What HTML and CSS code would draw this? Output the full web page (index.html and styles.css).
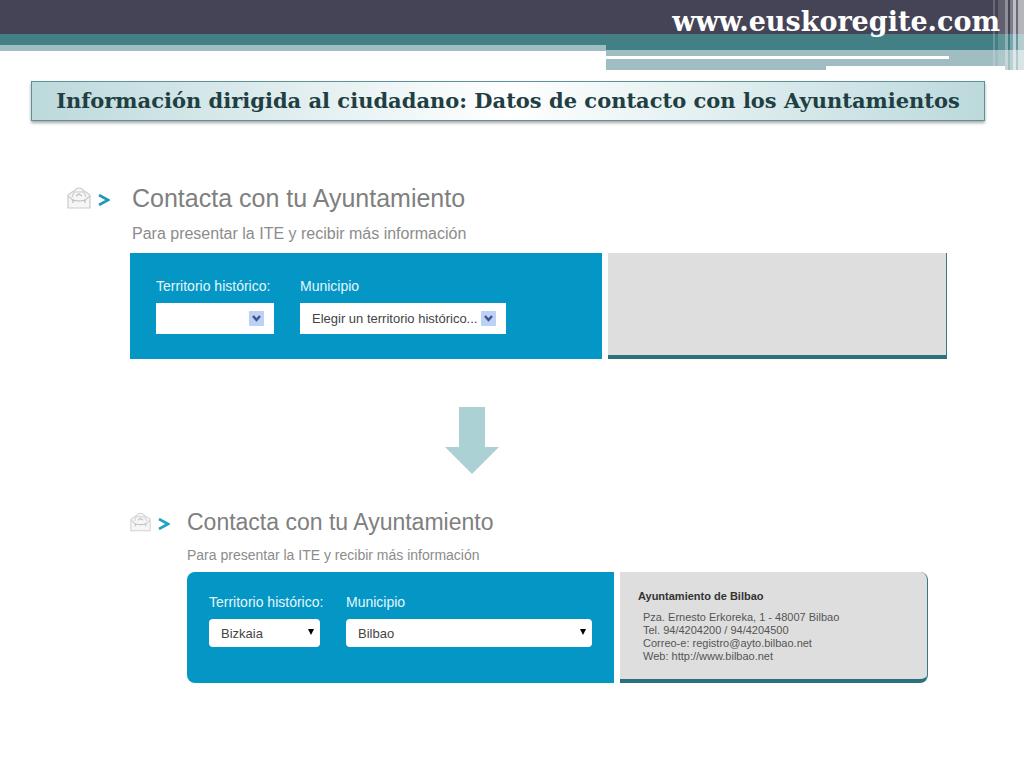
FILE: index.html
```html
<!DOCTYPE html>
<html lang="es">
<head>
    <meta charset="UTF-8">
    <meta name="viewport" content="width=device-width, initial-scale=1.0">
    <title>www.euskoregite.com</title>
    <link rel="stylesheet" href="styles.css">
</head>
<body>
    <header class="cabecera">
        <div class="banda-oscura">
            <a href="#" class="sitio">www.euskoregite.com</a>
        </div>
        <div class="bandas">
            <div class="bandas-izq"></div>
            <div class="bandas-der">
                <div class="linea-blanca"></div>
                <div class="muesca"></div>
            </div>
        </div>
        <div class="rayas"></div>
    </header>

    <main>
        <h1 class="titulo">Información dirigida al ciudadano: Datos de contacto con los Ayuntamientos</h1>

        <section class="contacto">
            <div class="encabezado">
                <svg class="sobre" viewBox="0 0 24 22" fill="#f6f6f6" stroke="#cccccc" stroke-width="1.2">
                    <path d="M1 8 L5 5 Q8 4 9 2 Q12 0 15 2 Q16 4 19 5 L23 8 V21 H1 Z"/>
                    <path d="M5 10 L7 5 H17 L19 10 M1 9 L7 14 M23 9 L17 14" fill="none"/>
                    <path d="M6 16 V13 Q12 15 18 13 V16 M9 9 L12 7 L15 9" fill="none" stroke="#bdbdbd"/>
                </svg>
                <svg class="flecha" viewBox="0 0 12 12" fill="none" stroke="#1f9bb5" stroke-width="2.6">
                    <path d="M1 1 L10 6 L1 11"/>
                </svg>
                <h2>Contacta con tu Ayuntamiento</h2>
            </div>
            <p class="subtitulo">Para presentar la ITE y recibir más información</p>
            <div class="paneles">
                <form class="filtro">
                    <div class="campo campo-territorio">
                        <label for="territorio1">Territorio histórico:</label>
                        <div class="selector">
                            <select id="territorio1">
                                <option value="" selected></option>
                                <option>Bizkaia</option>
                            </select>
                            <svg class="boton-xp" viewBox="0 0 15 15">
                                <rect width="15" height="15" rx="1" fill="#bdd0f6"/>
                                <path d="M4 5 L7.500 9 L11 5" fill="none" stroke="#3c5488" stroke-width="2.4"/>
                            </svg>
                        </div>
                    </div>
                    <div class="campo campo-municipio">
                        <label for="municipio1">Municipio</label>
                        <div class="selector">
                            <select id="municipio1">
                                <option selected>Elegir un territorio histórico...</option>
                            </select>
                            <svg class="boton-xp" viewBox="0 0 15 15">
                                <rect width="15" height="15" rx="1" fill="#bdd0f6"/>
                                <path d="M4 5 L7.500 9 L11 5" fill="none" stroke="#3c5488" stroke-width="2.4"/>
                            </svg>
                        </div>
                    </div>
                </form>
                <div class="ficha"></div>
            </div>
        </section>

        <svg class="flecha-abajo" viewBox="0 0 54 67" fill="#abd1d5">
            <path d="M14 0 H40 V40 H54 L27 67 L0 40 H14 Z"/>
        </svg>

        <section class="contacto resultado">
            <div class="encabezado">
                <svg class="sobre" viewBox="0 0 24 22" fill="#f6f6f6" stroke="#d2d2d2" stroke-width="1.2">
                    <path d="M1 8 L5 5 Q8 4 9 2 Q12 0 15 2 Q16 4 19 5 L23 8 V21 H1 Z"/>
                    <path d="M5 10 L7 5 H17 L19 10 M1 9 L7 14 M23 9 L17 14" fill="none"/>
                    <path d="M6 16 V13 Q12 15 18 13 V16 M9 9 L12 7 L15 9" fill="none" stroke="#c2c2c2"/>
                </svg>
                <svg class="flecha" viewBox="0 0 12 12" fill="none" stroke="#1fa5bd" stroke-width="2.6">
                    <path d="M1 1 L10 6 L1 11"/>
                </svg>
                <h2>Contacta con tu Ayuntamiento</h2>
            </div>
            <p class="subtitulo">Para presentar la ITE y recibir más información</p>
            <div class="paneles">
                <form class="filtro">
                    <div class="campo campo-territorio">
                        <label for="territorio2">Territorio histórico:</label>
                        <div class="selector">
                            <select id="territorio2">
                                <option selected>Bizkaia</option>
                            </select>
                            <svg class="triangulo" viewBox="0 0 6 6"><path d="M0 0 H6 L3 6 Z"/></svg>
                        </div>
                    </div>
                    <div class="campo campo-municipio">
                        <label for="municipio2">Municipio</label>
                        <div class="selector">
                            <select id="municipio2">
                                <option selected>Bilbao</option>
                            </select>
                            <svg class="triangulo" viewBox="0 0 6 6"><path d="M0 0 H6 L3 6 Z"/></svg>
                        </div>
                    </div>
                </form>
                <div class="ficha">
                    <h3>Ayuntamiento de Bilbao</h3>
                    <address>
                        Pza. Ernesto Erkoreka, 1 - 48007 Bilbao<br>
                        Tel. 94/4204200 / 94/4204500<br>
                        Correo-e: <a href="#">registro@ayto.bilbao.net</a><br>
                        Web: <a href="#">http://www.bilbao.net</a>
                    </address>
                </div>
            </div>
        </section>
    </main>
</body>
</html>
```
FILE: styles.css
```css
* {
    margin: 0;
    padding: 0;
    box-sizing: border-box;
}
body {
    font-family: "Liberation Sans", Arial, sans-serif;
    background: #fff;
    color: #444;
}
a {
    color: inherit;
    text-decoration: none;
}

/* Cabecera */
.cabecera {
    position: relative;
}
.banda-oscura {
    height: 34px;
    padding-right: 24px;
    background: #444456;
    text-align: right;
}
.sitio {
    position: relative;
    z-index: 2;
    font-family: Georgia, "DejaVu Serif", serif;
    font-size: 27px;
    line-height: 44px;
    font-weight: bold;
    color: #fff;
}
.bandas {
    display: flex;
    align-items: flex-start;
}
.bandas-izq {
    width: 59.2%;
    height: 17px;
    background: #438086;
    border-bottom: 6px solid #a0bdc1;
}
.bandas-der {
    flex: 1;
    height: 36px;
    border-top: 16px solid #438086;
    background: #a0bdc1;
}
.linea-blanca {
    width: 82%;
    height: 3px;
    margin-top: 6px;
    background: #fff;
}
.muesca {
    height: 4px;
    margin: 7px 19px 0 52.6%;
    background: #fff;
}
.rayas {
    position: absolute;
    top: 0;
    right: 0;
    width: 31px;
    height: 70px;
    background: linear-gradient(90deg,
        rgba(255, 255, 255, 0.2) 0 2px,
        transparent 2px 5px,
        rgba(255, 255, 255, 0.15) 5px 12px,
        rgba(255, 255, 255, 0.4) 12px 15px,
        transparent 15px 17px,
        rgba(255, 255, 255, 0.3) 17px 20px,
        rgba(255, 255, 255, 0.65) 20px 23px,
        rgba(255, 255, 255, 0.2) 23px 25px,
        rgba(255, 255, 255, 0.6) 25px 31px);
}

/* Título */
.titulo {
    margin: 11px 39px 0 31px;
    border: 1px solid #5f9095;
    background: linear-gradient(90deg, #bcd9dc, #fff 50%, #bcd9dc);
    box-shadow: 0 2px 3px rgba(0, 0, 0, 0.35);
    font-family: Georgia, "DejaVu Serif", serif;
    font-size: 21px;
    line-height: 38px;
    text-align: center;
    color: #213f43;
}

/* Bloques de contacto */
.contacto {
    margin: 61px 77px 0 67px;
}
.encabezado {
    display: flex;
    align-items: center;
}
.sobre {
    width: 24px;
    height: 22px;
}
.flecha {
    width: 12px;
    height: 12px;
    margin: 4px 22px 0 7px;
}
h2 {
    font-size: 25px;
    line-height: 32px;
    font-weight: normal;
    color: #808080;
}
.subtitulo {
    margin: 10px 0 9px 65px;
    font-size: 16px;
    line-height: 20px;
    color: #8c8c8c;
}
.paneles {
    display: flex;
    gap: 6px;
    margin-left: 63px;
}
.filtro {
    display: flex;
    gap: 26px;
    width: 472px;
    height: 106px;
    padding: 24px 26px;
    background: #0497c6;
}
.campo label {
    display: block;
    font-size: 14px;
    line-height: 18px;
    margin-bottom: 8px;
    color: #e4f6fb;
    white-space: nowrap;
}
.campo-territorio {
    width: 118px;
}
.campo-municipio {
    width: 206px;
}
.selector {
    position: relative;
}
select {
    display: block;
    width: 100%;
    height: 31px;
    padding: 0 12px;
    border: none;
    appearance: none;
    background: #fff;
    font-family: inherit;
    font-size: 13px;
    color: #444;
}
.boton-xp {
    position: absolute;
    top: 8px;
    right: 10px;
    width: 15px;
    height: 15px;
    pointer-events: none;
}
.triangulo {
    position: absolute;
    top: 10px;
    right: 6px;
    width: 6px;
    height: 6px;
    pointer-events: none;
}
.ficha {
    flex: 1;
    background: #dedede;
    border-right: 1px solid #3c7880;
    border-bottom: 4px solid #2a7180;
}
.flecha-abajo {
    display: block;
    width: 54px;
    height: 67px;
    margin: 48px 0 0 445px;
}

/* Bloque con el ayuntamiento elegido */
.resultado {
    margin: 33px 96px 0 130px;
}
.resultado .sobre {
    width: 21px;
    height: 20px;
}
.resultado .flecha {
    margin: 4px 17px 0 7px;
}
.resultado h2 {
    font-size: 23px;
    line-height: 30px;
}
.resultado .subtitulo {
    margin: 8px 0 7px 57px;
    font-size: 14px;
}
.resultado .paneles {
    margin-left: 57px;
}
.resultado .filtro {
    width: 427px;
    height: 111px;
    padding: 21px 22px;
    border-radius: 8px 0 0 8px;
}
.resultado .campo-territorio {
    width: 111px;
}
.resultado .campo-municipio {
    width: 248px;
}
.resultado select {
    height: 28px;
    border-radius: 4px;
}
.resultado .ficha {
    padding: 16px 18px;
    border-radius: 0 8px 8px 0;
}
h3 {
    margin-bottom: 7px;
    font-size: 11px;
    line-height: 16px;
    color: #333;
}
address {
    padding-left: 5px;
    font-size: 11px;
    line-height: 13px;
    font-style: normal;
    color: #555;
}
```
